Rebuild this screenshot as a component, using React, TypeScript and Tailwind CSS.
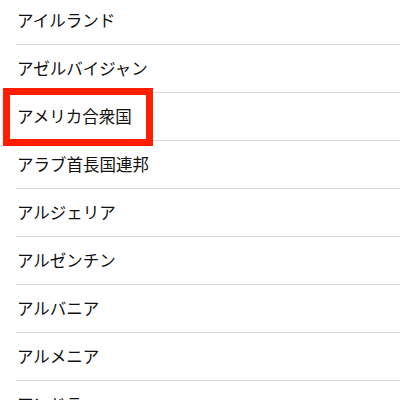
import React from "react";

const countries = [
  "アイルランド",
  "アゼルバイジャン",
  "アメリカ合衆国",
  "アラブ首長国連邦",
  "アルジェリア",
  "アルゼンチン",
  "アルバニア",
  "アルメニア",
  "アンドラ",
];

export default function App() {
  return (
    <div
      className="w-[400px] h-[400px] overflow-hidden bg-white"
      style={{ fontFamily: '"Noto Sans CJK JP", "Noto Sans", sans-serif' }}
    >
      <ul className="-mt-[3px]">
        {countries.map((name, i) => (
          <li key={name} className="relative pl-4">
            <div className="h-[48px] flex items-center border-b border-[#d8d8d8] text-[16.5px] text-[#111] pl-px">
              {name}
            </div>
            {i === 2 && (
              <div className="absolute left-[3px] top-[-5px] w-[150px] h-[58px] border-[7px] border-[#ff1e00]" />
            )}
          </li>
        ))}
      </ul>
    </div>
  );
}
